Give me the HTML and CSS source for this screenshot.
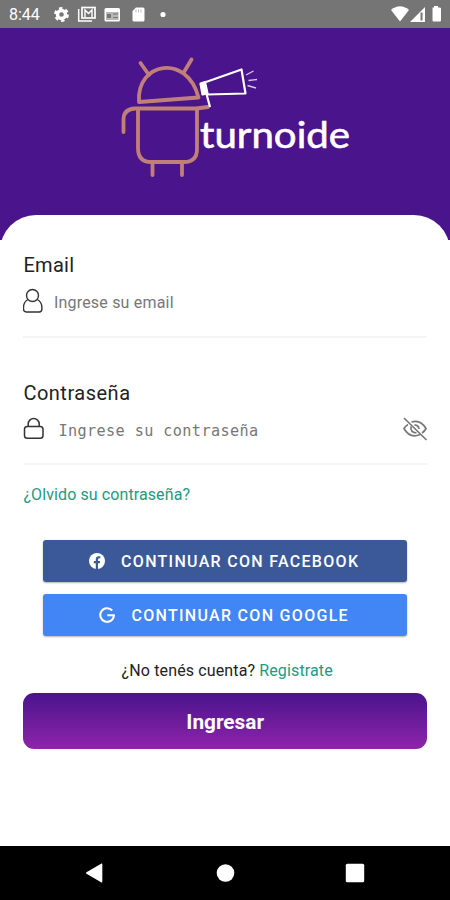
FILE: index.html
```html
<!DOCTYPE html>
<html lang="es">
<head>
<meta charset="utf-8">
<title>Turnoide</title>
<link rel="stylesheet" href="styles.css">
</head>
<body>
<div class="screen">
  <header class="status">
    <span class="clock">8:44</span>
    <svg class="status-icons" viewBox="50 0 120 28" width="120" height="28" fill="#fff">
      <circle cx="61.500" cy="14.500" r="4" fill="none" stroke="#fff" stroke-width="3.400"/>
      <circle cx="61.500" cy="14.500" r="6.200" fill="none" stroke="#fff" stroke-width="2.400" stroke-dasharray="3.400 3.093"/>
      <path d="M78.700 9v12H92" fill="none" stroke="#fff" stroke-width="1.500"/>
      <rect x="82" y="7.500" width="13" height="10.500" fill="none" stroke="#fff" stroke-width="1.700"/>
      <path d="M85 17V10l3.500 3.500L92 10v7" fill="none" stroke="#fff" stroke-width="1.400"/>
      <rect x="104.500" y="8" width="15.500" height="13.500" rx="1.500"/>
      <rect x="106" y="12" width="12.500" height="8" fill="#b8b8b8"/>
      <path d="M107 14h4v4h-4zM113 13.500h5v1h-5zM113 17h5v1h-5z" fill="#757575"/>
      <path d="M136 7.500h7q1.500 0 1.500 1.500v11q0 1.500-1.500 1.500h-9q-1.500 0-1.500-1.500v-9z"/>
      <path d="M136 9.500v3M138.500 9.500v3M141 9.500v3" stroke="#aaa" stroke-width=".8"/>
      <circle cx="163" cy="14.500" r="2.600"/>
    </svg>
    <svg class="signal" viewBox="388 0 62 28" width="62" height="28" fill="#fff">
      <path d="M391 10q9-7.500 18 0l-9 11.500z"/>
      <path fill-rule="evenodd" d="M410 22L425 7v15zM420.500 12.500v8h2v-8z"/>
      <path d="M432.500 7.500h1.500V6h4v1.500h1.500q1.500 0 1.500 1v12q0 1-1 1h-6.500q-1 0-1-1z"/>
    </svg>
  </header>

  <section class="hero">
    <svg class="logo" viewBox="115 50 245 135" width="245" height="135" fill="none">
      <g stroke="#c08078" stroke-width="3.800" stroke-linecap="round" stroke-linejoin="round">
        <path d="M139 102C136 62 187 53 198.500 97.500Z"/>
        <path d="M140.500 63L149 75M191.500 59.500L184 72"/>
        <path d="M123.500 132V119Q124 109 135 108.500H196L208 107"/>
        <path d="M138 109V148Q138 162 151 162H184Q197 162 197 149V109"/>
        <path d="M152.500 163V175M182 163V175"/>
      </g>
      <g stroke="#fff" stroke-width="2.200" stroke-linejoin="round">
        <path d="M206 82L241.500 69.500 245.500 93.500 207 94.500M206.500 94L210 107"/>
        <path d="M200.500 83.500L205 82 207.500 93.500 202.500 94.500Z" fill="#fff"/>
        <path d="M246 75L253.500 71M248.500 80.500L257 79.500M247.500 85.500L256 88" stroke-width="1.400" stroke="#d8c8ee"/>
      </g>
      <text class="wordmark" x="200" y="148" textLength="150" lengthAdjust="spacingAndGlyphs">turnoide</text>
    </svg>
  </section>

  <main class="card">
    <div class="label">Email</div>
    <div class="field email-field">
      <svg class="user-icon" viewBox="0 0 22 26" width="22" height="26" fill="none" stroke="#333" stroke-width="1.400">
        <circle cx="9.500" cy="7.500" r="6"/>
        <path d="M5 11.500Q.5 14 .5 19.500v1.500Q.5 24 3.200 24h13q2.700 0 2.700-3v-1.500q0-5.500-4.700-8"/>
      </svg>
      <span class="hint">Ingrese su email</span>
    </div>
    <div class="label password-label">Contraseña</div>
    <div class="field password-field">
      <svg class="lock-icon" viewBox="0 0 22 24" width="22" height="24" fill="none" stroke="#333" stroke-width="1.500">
        <rect x="1.500" y="10.500" width="18.500" height="11.800" rx="2.800"/>
        <path d="M5.200 10.500V8a5.500 5.500 0 0 1 11 0v2.500"/>
      </svg>
      <span class="hint mono">Ingrese su contraseña</span>
      <svg class="eye-icon" viewBox="0 0 26 26" width="26" height="26" fill="none" stroke="#777" stroke-width="1.700">
        <path d="M2 2L24.500 24"/>
        <path d="M9.500 6Q18.500 3 24 12.500 22.500 15.500 20 17M6 8.500Q3.500 10 2 12.500 8 23 18 18.500"/>
        <path d="M12.500 8.800Q16.500 9 17 13M9 10.500Q8 16.500 14.500 17"/>
      </svg>
    </div>
    <a class="forgot">¿Olvido su contraseña?</a>
    <div class="social">
      <button class="btn facebook">
        <svg viewBox="0 0 16 16" width="16" height="16"><circle cx="8" cy="8" r="8" fill="#fff"/><path d="M6.800 16V10.300H4.800V8h2V6.300q0-3 3-3h1.500v2h-1.100q-1.200 0-1.200 1.200V8h2.200l-.4 2.300H9V16z" fill="#3b5998"/></svg>
        <span>CONTINUAR CON FACEBOOK</span>
      </button>
      <button class="btn google">
        <svg viewBox="0 0 16 16" width="16" height="16" fill="none" stroke="#fff" stroke-width="2.100"><path d="M13.200 3.500A6.800 6.800 0 1 0 14.900 8.200H8.300"/></svg>
        <span>CONTINUAR CON GOOGLE</span>
      </button>
    </div>
    <p class="signup">¿No tenés cuenta? <a>Registrate</a></p>
    <button class="submit">Ingresar</button>
  </main>

  <nav class="navbar">
    <svg viewBox="0 0 20 20" width="20" height="20" fill="#fff"><path d="M1.500 9.300L16.500.6q.8-.4.8.6v17.600q0 1-.8.6L1.500 10.700q-1.200-.7 0-1.400z"/></svg>
    <svg viewBox="0 0 20 20" width="20" height="20" fill="#fff"><circle cx="10.500" cy="10" r="8.800"/></svg>
    <svg viewBox="0 0 20 20" width="20" height="20" fill="#fff"><rect x=".8" y=".8" width="18.400" height="18.400" rx="1.500"/></svg>
  </nav>
</div>
</body>
</html>
```
FILE: styles.css
```css
* { box-sizing: border-box; }
body { margin: 0; font-family: Roboto, sans-serif; background: #fff; }
button { border: 0; padding: 0; font-family: inherit; color: #fff; }

.screen {
  width: 450px;
  height: 900px;
  display: flex;
  flex-direction: column;
  background: linear-gradient(#4a148c 0 240px, #fff 240px);
}

.status {
  height: 28px;
  flex: none;
  display: flex;
  align-items: center;
  background: #757575;
  color: #fff;
}
.clock { width: 50px; padding-left: 9px; font-size: 16px; line-height: 28px; padding-top: 2px; }
.signal { margin-left: auto; }

.hero { height: 187px; flex: none; padding: 22px 0 0 115px; }
.logo { display: block; }
.wordmark {
  font-family: Lato, sans-serif;
  font-size: 37px;
  font-weight: 400;
  fill: #fff;
  stroke: #fff;
  stroke-width: .6px;
}

.card {
  flex: 1;
  background: #fff;
  border-radius: 36px 36px 0 0;
  padding: 36px 23px 0 23.4px;
}
.label { font-size: 20px; line-height: 28px; color: #222; letter-spacing: .3px; }
.password-label { letter-spacing: .5px; }
.field { display: flex; border-bottom: 2px solid #f5f5f5; }
.email-field { height: 59px; margin-bottom: 41px; padding-top: 9px; }
.password-field { height: 58px; padding-top: 9px; }
.hint { font-size: 16px; line-height: 20px; color: #777; margin-left: 8.5px; padding-top: 5px; }
.email-field .hint { letter-spacing: .2px; }
.mono { font-family: "DejaVu Sans Mono", monospace; font-size: 15.2px; letter-spacing: .39px; margin-left: 13px; }
.eye-icon { margin-left: auto; margin-right: -1px; }

.forgot { display: block; margin-top: 20px; font-size: 16px; line-height: 20px; letter-spacing: .1px; color: #229a80; }

.social { display: grid; gap: 12px; margin: 35px 20px 0; }
.btn {
  height: 42px;
  display: flex;
  align-items: center;
  justify-content: center;
  gap: 16px;
  border-radius: 3px;
  font-size: 16px;
  font-weight: 500;
  letter-spacing: 1.3px;
  padding-right: 2px;
  box-shadow: 0 1px 2px rgba(0, 0, 0, .3);
}
.btn span { padding-top: 1px; }
.facebook { background: #3b5998; }
.google { background: #4285f4; }

.signup { margin: 25px 0 12px; text-align: center; font-size: 16px; line-height: 20px; letter-spacing: .13px; color: #222; padding-left: 4px; }
.signup a { color: #229a80; }

.submit {
  display: block;
  width: 100%;
  height: 56px;
  border-radius: 11px;
  background: linear-gradient(#4a148c, #8e24aa);
  font-size: 20.8px;
  font-weight: 700;
  padding-top: 2px;
}

.navbar {
  height: 54px;
  flex: none;
  display: flex;
  justify-content: space-between;
  align-items: center;
  padding: 0 85px;
  background: #000;
}
```
